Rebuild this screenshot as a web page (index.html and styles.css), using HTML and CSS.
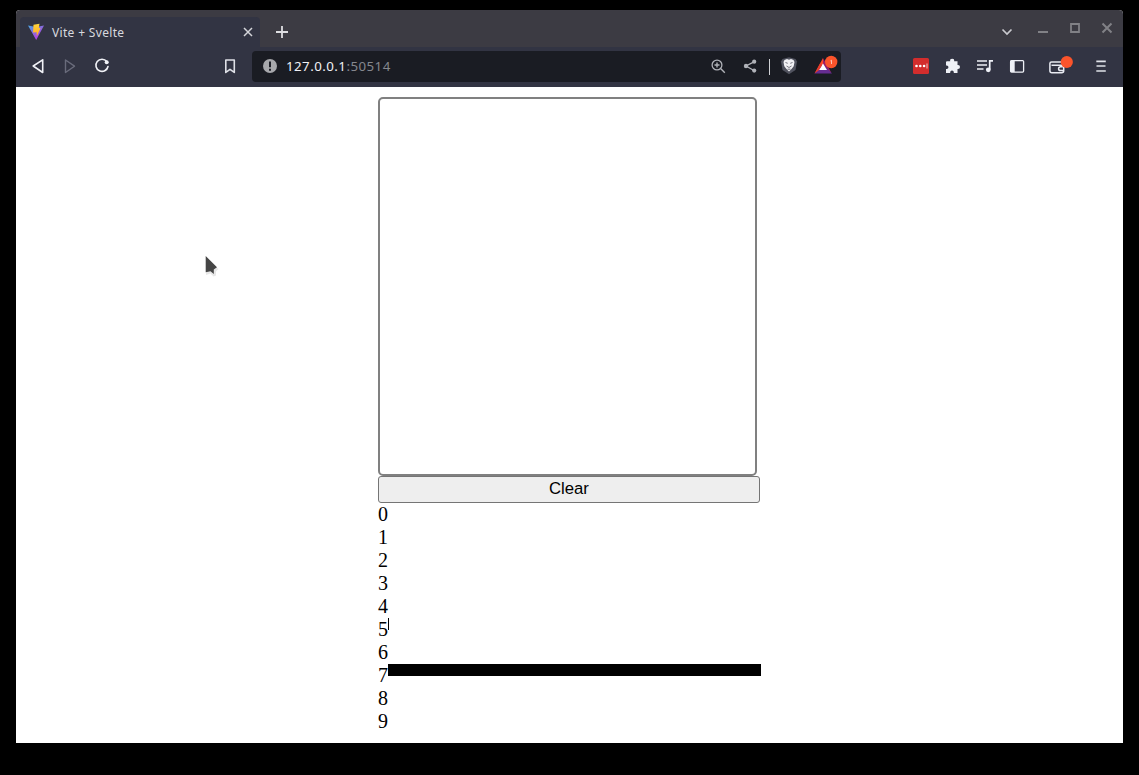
FILE: index.html
```html
<!DOCTYPE html>
<html lang="en">
<head>
<meta charset="utf-8">
<title>Vite + Svelte</title>
<link rel="stylesheet" href="styles.css">
</head>
<body>
<div class="window">
  <header class="tabs">
    <div class="tab">
      <svg class="logo" width="18" height="18" viewBox="0 0 18 18">
        <defs>
          <linearGradient id="vite" x1="0" y1="0" x2="0.7" y2="1"><stop offset="0" stop-color="#48a8e6"/><stop offset="0.5" stop-color="#8b68dc"/><stop offset="1" stop-color="#bd34e8"/></linearGradient>
          <linearGradient id="bolt" x1="0" y1="0" x2="0" y2="1"><stop offset="0" stop-color="#ffd53d"/><stop offset="1" stop-color="#ffa820"/></linearGradient>
        </defs>
        <path d="M1 2.6 9 4l8-1.4L9.2 17z" fill="url(#vite)"/>
        <path d="m6.500 1.7 6-1-.7 4.300 1.700.2-3.700 8-.2-4-3.600.2z" fill="url(#bolt)"/>
      </svg>
      <span class="tab-title">Vite + Svelte</span>
      <svg class="tab-close" width="24" height="30" viewBox="0 0 24 30"><path d="m8 11 8 8m0-8-8 8" stroke="#d4d5da" stroke-width="1.5"/></svg>
    </div>
    <svg class="new-tab" width="32" height="37" viewBox="0 0 32 37"><path d="M10 22h12M16 16v12" stroke="#dedee2" stroke-width="1.8"/></svg>
    <div class="controls">
      <svg class="tab-list" width="32" height="37" viewBox="0 0 32 37"><path d="m11.5 19.5 4.5 4.5 4.5-4.5" fill="none" stroke="#c9c9ce" stroke-width="1.7"/></svg>
      <svg width="32" height="37" viewBox="0 0 32 37"><path d="M11 22h10" stroke="#818186" stroke-width="2"/></svg>
      <svg width="32" height="37" viewBox="0 0 32 37"><path d="M12 14h8v8h-8z" fill="none" stroke="#818186" stroke-width="1.8"/></svg>
      <svg width="32" height="37" viewBox="0 0 32 37"><path d="m11.5 13.5 9 9m0-9-9 9" stroke="#818186" stroke-width="2"/></svg>
    </div>
  </header>
  <nav class="toolbar">
    <svg class="tool" viewBox="0 0 32 40"><path d="M20.7 12.8v12.7L11.2 19z" fill="none" stroke="#f0f1f6" stroke-width="1.6" stroke-linejoin="round"/></svg>
    <svg class="tool" viewBox="0 0 32 40"><path d="M11.5 13v12.5l9-6.3z" fill="none" stroke="#696b7b" stroke-width="1.4" stroke-linejoin="round"/></svg>
    <svg class="tool" viewBox="0 0 32 40"><path d="M20.8 14.5A6.1 6.1 0 1 0 22 19.5" fill="none" stroke="#f0f1f6" stroke-width="1.6" stroke-linecap="round"/><circle cx="20.7" cy="15.2" r="2" fill="#f0f1f6"/></svg>
    <svg class="tool bookmark" viewBox="0 0 32 40"><path d="M11.8 13h8.500v12.400L16 22.300l-4.200 3.100z" fill="none" stroke="#dfe0e7" stroke-width="1.6" stroke-linejoin="round"/></svg>
    <div class="address">
      <svg class="site-info" width="34" height="31" viewBox="0 0 34 31"><circle cx="18" cy="15" r="7" fill="#a7a8ac"/><path d="M18 10.500v5.800m0 1.500v2" stroke="#1c1e26" stroke-width="2"/></svg>
      <span class="host">127.0.0.1</span><span class="port">:50514</span>
      <svg class="url-tool first" viewBox="0 0 32 31"><circle cx="15" cy="14" r="4.9" fill="none" stroke="#b0b2b8" stroke-width="1.3"/><path d="M12.500 14h5M15 11.500v5m3.600 1.100 4.200 4.200" stroke="#b0b2b8" stroke-width="1.4"/></svg>
      <svg class="url-tool" viewBox="0 0 32 31"><path d="m20 10.800-8 4.200 8 4.500" fill="none" stroke="#b0b2b8" stroke-width="1.4"/><g fill="#b0b2b8"><circle cx="20.2" cy="10.700" r="2.1"/><circle cx="12" cy="15" r="2.2"/><circle cx="20.2" cy="19.600" r="2.1"/></g></svg>
      <span class="divider"></span>
      <svg class="url-tool shield" viewBox="0 0 32 31"><path d="m9.500 8 6.500-1.800L22.500 8l1.500 2.500-1.500 8.600-6.500 4.200-6.500-4.200L8 10.500z" fill="#50525e"/><path d="m11.500 9 2.500-1 2 .7L18 8l2.500 1 1 2-.8 4.300-2.200 2.700L16 20.500 13.500 18l-2.200-2.700L10.500 11z" fill="#f1f1f4"/><path d="m12.500 11.500 2.200.8m4.800-.8-2.200.8M13.500 15l2.500 1.500 2.500-1.500m-4 3.200h3" fill="none" stroke="#666772" stroke-width=".9"/></svg>
      <svg class="url-tool bat" viewBox="0 0 32 31"><path d="m14 7-8 15 8-7z" fill="#ff4724"/><path d="m14 7 8.500 15-8.500-7z" fill="#9e1f63"/><path d="M5.500 22.500H23L14 13z" fill="#662d91"/><path d="m14 12.500-4 6.500h8z" fill="#fff"/><path d="m5.500 22.500 6-11 1.500 3-3.500 5z" fill="#e53c2c"/><circle cx="22.2" cy="11" r="6.2" fill="#fb542b"/><path d="m21.400 9.900 1.100-.6V13" fill="none" stroke="#ffe0d5" stroke-width=".8"/></svg>
    </div>
    <svg class="tool extensions" viewBox="0 0 32 40"><rect x="8" y="11" width="16" height="16" rx="1.5" fill="#d32d2d"/><g fill="#fff"><circle cx="11.500" cy="19" r="1.3"/><circle cx="15.300" cy="19" r="1.3"/><circle cx="19.100" cy="19" r="1.3"/><path d="M21.500 16.500h1v5h-1z" opacity=".7"/></g></svg>
    <svg class="tool" viewBox="0 0 32 40"><path d="M10 14.200h3.200a2 2 0 1 1 3.900 0h3.400v3.700h.5a2 2 0 1 1 0 4h-.5v4h-3.700v-.6a1.800 1.800 0 0 0-3.600 0v.6H9v-4h.7a1.700 1.700 0 0 0 0-3.500H9v-3.200a1 1 0 0 1 1-1z" fill="#eef0f6"/></svg>
    <svg class="tool" viewBox="0 0 32 40"><path d="M8 14h10m-10 4h10M8 22h6.500" fill="none" stroke="#eef0f6" stroke-width="1.6"/><path d="M20.700 22.500V13.800H24" fill="none" stroke="#eef0f6" stroke-width="1.7"/><circle cx="19.300" cy="22.800" r="2.4" fill="#eef0f6"/></svg>
    <svg class="tool" viewBox="0 0 32 40"><rect x="9.600" y="13.600" width="13" height="11.500" rx="1" fill="none" stroke="#eef0f6" stroke-width="1.3"/><path d="M9.500 13.500h4.200v11.600H9.500z" fill="#eef0f6"/></svg>
    <svg class="tool wallet" viewBox="0 0 32 40"><path d="M19 15H7.500a1.600 1.600 0 0 0-1.600 1.600v7.200a2 2 0 0 0 2 2h9.800a2 2 0 0 0 2-2v-5.600H7.500m12.200 1.600h-3.200a1.900 1.900 0 0 0 0 3.800h3.200z" fill="none" stroke="#e8eaf1" stroke-width="1.5"/><circle cx="22.800" cy="15" r="6.1" fill="#fb542b"/></svg>
    <svg class="tool menu" viewBox="0 0 32 40"><path d="M11.300 14.300h9.500m-9.300 4.700h9m-9.200 5h9.500" stroke="#e0e2e9" stroke-width="1.7"/></svg>
  </nav>
  <main class="page">
    <div class="app">
      <div class="canvas"></div>
      <button class="clear">Clear</button>
      <div class="chart">
        <div class="row">0</div>
        <div class="row">1</div>
        <div class="row">2</div>
        <div class="row">3</div>
        <div class="row">4</div>
        <div class="row">5<span class="bar" style="width:1px"></span></div>
        <div class="row">6</div>
        <div class="row">7<span class="bar" style="width:373px"></span></div>
        <div class="row">8</div>
        <div class="row">9</div>
      </div>
    </div>
    <svg class="cursor" width="20" height="26" viewBox="0 0 20 26"><path d="M3 3v17l4.500-1.500 3 3 2.500-1v-4l2.500-2.500z" fill="#bbb" opacity=".35"/><path d="M2.700 1v16.200l4.800-1L10.800 19V14.500l3.200-2.300z" fill="#454545"/></svg>
  </main>
</div>
</body>
</html>
```
FILE: styles.css
```css
* { box-sizing: border-box; }
body { margin: 0; height: 775px; padding: 10px 16px 32px; background: #000; overflow: hidden; }
svg { display: block; flex: none; }
.window { height: 733px; display: flex; flex-direction: column; background: #fff; border-radius: 4px 4px 0 0; overflow: hidden; }
.tabs { height: 37px; flex: none; display: flex; background: #3c3b43; padding-left: 4px; }
.tab { width: 240px; height: 30px; margin-top: 7px; display: flex; align-items: center; padding-left: 7px; background: #323443; border-radius: 4px 4px 0 0; }
.tab-title { margin: 1px 0 0 7px; font: 12px/30px "Noto Sans", sans-serif; letter-spacing: .33px; color: #d8d9df; }
.tab-close { margin-left: auto; }
.new-tab { margin-left: 6px; }
.controls { display: flex; margin-left: auto; }
.tab-list { margin-right: 4px; }
.toolbar { height: 40px; flex: none; display: flex; align-items: center; padding-left: 6px; background: #323443; }
.tool { width: 32px; height: 40px; }
.bookmark { margin-left: 96px; }
.address { width: 589px; height: 31px; margin: 0 0 1px 6px; display: flex; align-items: center; background: #1a1c23; border-radius: 4px; font: 13.3px/28px "Noto Sans", sans-serif; letter-spacing: .45px; }
.host, .port { padding-bottom: 2px; }
.host { color: #f0f1f5; }
.port { color: #85878e; }
.url-tool { width: 32px; height: 31px; }
.first { margin-left: auto; }
.divider { width: 1px; height: 16px; margin-left: 3px; background: #d0d1d5; }
.shield { margin-left: 3px; }
.bat { margin-left: 4px; }
.extensions { margin-left: 64px; }
.wallet { margin-left: 11px; }
.menu { margin-left: 9px; }
.page { position: relative; flex: 1; padding: 10px 0 0 362px; }
.app { width: 382px; font: 20px/23px "Liberation Serif", serif; color: #000; }
.canvas { width: 379px; height: 379px; border: 2px solid #808080; border-radius: 5px; }
.clear { display: block; width: 382px; height: 27px; padding: 0 0 2px; border: 1px solid #757575; border-radius: 3px; background: #eee; font: 16.7px "Liberation Sans", sans-serif; color: #000; }
.row { height: 23px; display: flex; align-items: flex-start; }
.bar { flex: none; height: 12px; background: #000; }
.cursor { position: absolute; left: 187px; top: 168px; }
```
